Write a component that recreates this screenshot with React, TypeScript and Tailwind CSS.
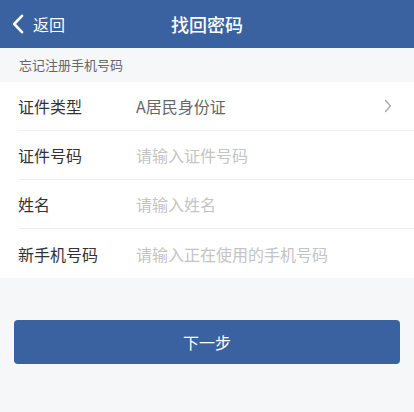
import React from "react";

const font = { fontFamily: '"Noto Sans CJK SC", "Noto Sans", sans-serif' };

function Row({ label, value, placeholder, chevron, last }: { label: string; value?: string; placeholder?: string; chevron?: boolean; last?: boolean }) {
  return (
    <div className="pl-[18px] bg-white">
      <div className={`flex items-center h-[49px] pr-[22px] ${last ? "" : "border-b border-[#efefef]"}`}>
        <div className="w-[118px] text-[16px] text-[#333]">{label}</div>
        <div className={`flex-1 text-[16px] ${value ? "text-[#666]" : "text-[#c4c4c4]"}`}>{value ?? placeholder}</div>
        {chevron && (
          <svg width="8" height="14" viewBox="0 0 8 14" fill="none">
            <path d="M1.5 1.5 L6.5 7 L1.5 12.5" stroke="#aaa" strokeWidth="1.3" strokeLinecap="round" strokeLinejoin="round" />
          </svg>
        )}
      </div>
    </div>
  );
}

export default function App() {
  return (
    <div className="w-[414px] h-[412px] bg-[#f5f7f9] flex flex-col" style={font}>
      <div className="h-[48px] bg-[#3a62a0] flex items-center relative">
        <div className="flex items-center pl-[12px] text-white">
          <svg width="12" height="20" viewBox="0 0 12 20" fill="none">
            <path d="M10 1.8 L2.2 10 L10 18.2" stroke="white" strokeWidth="2.6" strokeLinecap="round" strokeLinejoin="round" />
          </svg>
          <span className="ml-[9px] text-[16px]">返回</span>
        </div>
        <div className="absolute inset-0 flex items-center justify-center text-white text-[18px] font-medium pointer-events-none">找回密码</div>
      </div>
      <div className="h-[34px] flex items-center pl-[19px] text-[13px] text-[#666]">忘记注册手机号码</div>
      <Row label="证件类型" value="A居民身份证" chevron />
      <Row label="证件号码" placeholder="请输入证件号码" />
      <Row label="姓名" placeholder="请输入姓名" />
      <Row label="新手机号码" placeholder="请输入正在使用的手机号码" last />
      <div className="px-[14px] pt-[42px]">
        <button className="w-full h-[44px] rounded-[4px] bg-[#3a62a0] text-white text-[16px]">下一步</button>
      </div>
    </div>
  );
}
